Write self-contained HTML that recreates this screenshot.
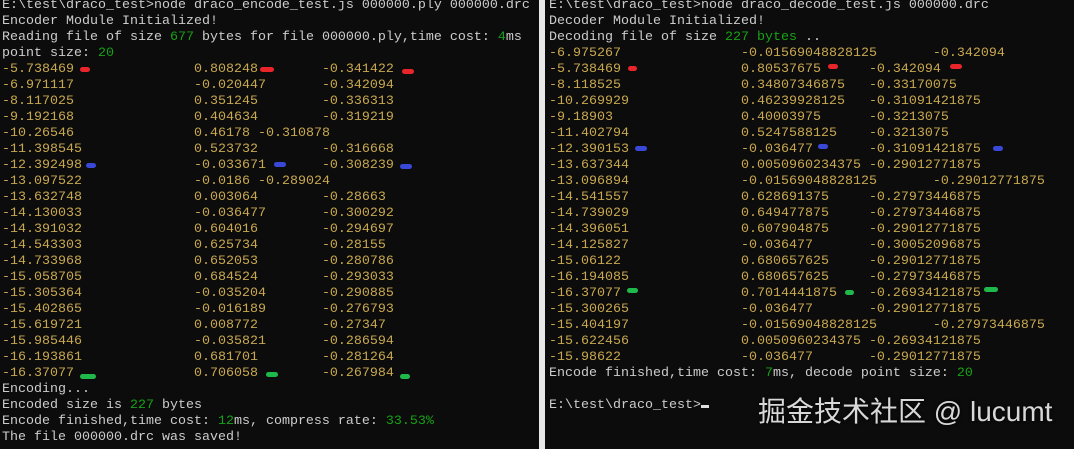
<!DOCTYPE html>
<html><head><meta charset="utf-8"><style>
html,body{margin:0;padding:0;background:#0c0c0c;width:1074px;height:449px;overflow:hidden;position:relative}
pre{position:absolute;margin:0;font-family:"Liberation Mono","Noto Sans CJK SC",monospace;font-size:13.33px;line-height:16px;color:#cccccc;tab-size:8;-moz-tab-size:8;white-space:pre}
.y{color:#c8a850}.g{color:#16a116}
.m{position:absolute;height:5px;border-radius:3px}
.r{background:#e8252a}.b{background:#3a48d8}.gr{background:#1fb84a}
#div{position:absolute;left:539px;top:0;width:6px;height:449px;background:#e8e8e8}
#wm{position:absolute;left:758px;top:390px;font-family:"Liberation Sans","Noto Sans CJK SC",sans-serif;font-size:28px;color:#d8d8d8;text-shadow:0 0 3px #000;white-space:nowrap}
.cur{display:inline-block;width:8px;height:3px;background:#e0e0e0;vertical-align:baseline}
</style></head><body>
<pre style="left:2px;top:-2px">E:\test\draco_test&gt;node draco_encode_test.js 000000.ply 000000.drc
Encoder Module Initialized!
Reading file of size <span class="g">677</span> bytes for file 000000.ply,time cost: <span class="g">4</span>ms
point size: <span class="g">20</span>
<span class="y">-5.738469		0.808248	-0.341422
-6.971117		-0.020447	-0.342094
-8.117025		0.351245	-0.336313
-9.192168		0.404634	-0.319219
-10.26546		0.46178 -0.310878
-11.398545		0.523732	-0.316668
-12.392498		-0.033671	-0.308239
-13.097522		-0.0186 -0.289024
-13.632748		0.003064	-0.28663
-14.130033		-0.036477	-0.300292
-14.391032		0.604016	-0.294697
-14.543303		0.625734	-0.28155
-14.733968		0.652053	-0.280786
-15.058705		0.684524	-0.293033
-15.305364		-0.035204	-0.290885
-15.402865		-0.016189	-0.276793
-15.619721		0.008772	-0.27347
-15.985446		-0.035821	-0.286594
-16.193861		0.681701	-0.281264
-16.37077		0.706058	-0.267984</span>
Encoding...
Encoded size is <span class="g">227</span> bytes
Encode finished,time cost: <span class="g">12</span>ms, compress rate: <span class="g">33.53%</span>
The file 000000.drc was saved!</pre>
<div id="div"></div>
<pre style="left:549px;top:-2px">E:\test\draco_test&gt;node draco_decode_test.js 000000.drc
Decoder Module Initialized!
Decoding file of size <span class="g">227 bytes</span> ..
<span class="y">-6.975267		-0.01569048828125	-0.342094
-5.738469		0.80537675	-0.342094
-8.118525		0.34807346875	-0.33170075
-10.269929		0.46239928125	-0.31091421875
-9.18903		0.40003975	-0.3213075
-11.402794		0.5247588125	-0.3213075
-12.390153		-0.036477	-0.31091421875
-13.637344		0.0050960234375 -0.29012771875
-13.096894		-0.01569048828125	-0.29012771875
-14.541557		0.628691375	-0.27973446875
-14.739029		0.649477875	-0.27973446875
-14.396051		0.607904875	-0.29012771875
-14.125827		-0.036477	-0.30052096875
-15.06122		0.680657625	-0.29012771875
-16.194085		0.680657625	-0.27973446875
-16.37077		0.7014441875	-0.26934121875
-15.300265		-0.036477	-0.29012771875
-15.404197		-0.01569048828125	-0.27973446875
-15.622456		0.0050960234375 -0.26934121875
-15.98622		-0.036477	-0.29012771875</span>
Encode finished,time cost: <span class="g">7</span>ms, decode point size: <span class="g">20</span>

E:\test\draco_test&gt;<span class="cur"></span></pre>
<div class="m r" style="left:80px;top:67px;width:10px"></div>
<div class="m r" style="left:260px;top:67px;width:14px"></div>
<div class="m r" style="left:402px;top:69px;width:12px"></div>
<div class="m b" style="left:86px;top:163px;width:10px"></div>
<div class="m b" style="left:274px;top:162px;width:12px"></div>
<div class="m b" style="left:400px;top:164px;width:12px"></div>
<div class="m gr" style="left:80px;top:374px;width:16px"></div>
<div class="m gr" style="left:266px;top:372px;width:12px"></div>
<div class="m gr" style="left:400px;top:374px;width:10px"></div>
<div class="m r" style="left:628px;top:66px;width:9px"></div>
<div class="m r" style="left:828px;top:64px;width:10px"></div>
<div class="m r" style="left:950px;top:64px;width:12px"></div>
<div class="m b" style="left:635px;top:146px;width:12px"></div>
<div class="m b" style="left:818px;top:144px;width:10px"></div>
<div class="m b" style="left:993px;top:146px;width:10px"></div>
<div class="m gr" style="left:627px;top:288px;width:11px"></div>
<div class="m gr" style="left:845px;top:290px;width:9px"></div>
<div class="m gr" style="left:984px;top:287px;width:14px"></div>
<div id="wm">掘金技术社区 @ lucumt</div>
</body></html>
